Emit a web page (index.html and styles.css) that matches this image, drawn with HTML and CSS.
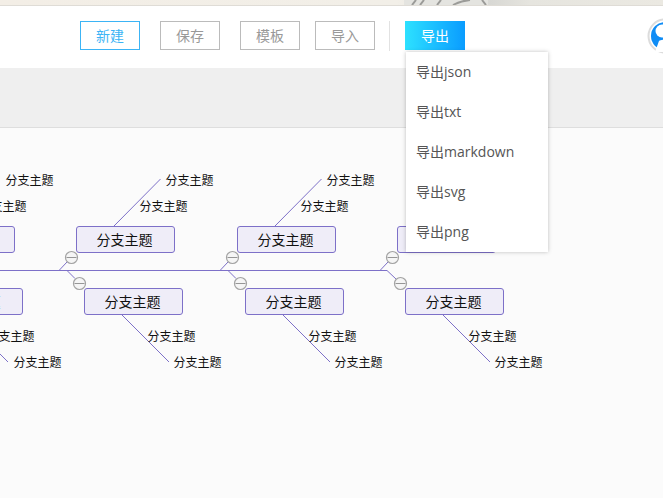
FILE: index.html
```html
<!DOCTYPE html>
<html lang="zh">
<head>
<meta charset="utf-8">
<title>导出</title>
<link rel="stylesheet" href="styles.css">
</head>
<body>
<div class="photo">
  <svg width="663" height="5" viewBox="0 0 663 5">
    <defs>
      <linearGradient id="wash" x1="0" x2="1" y1="0" y2="0">
        <stop offset="0" stop-color="#f3eee6"/>
        <stop offset=".6" stop-color="#f2efe8"/>
        <stop offset=".74" stop-color="#d8d8d4"/>
        <stop offset=".8" stop-color="#e6e5df"/>
        <stop offset="1" stop-color="#ebe9e2"/>
      </linearGradient>
    </defs>
    <rect width="663" height="5" fill="url(#wash)"/>
    <rect x="404" width="84" height="5" fill="#e4e4e0"/>
    <path d="M412 5L416 0M420 5L424 0M437 5L441 0M453 5Q460 1 470 0M482 0L486 5" fill="none" stroke="#9b9b98" stroke-width="2"/>
  </svg>
</div>
<header class="toolbar">
  <button class="btn btn-active">新建</button>
  <button class="btn">保存</button>
  <button class="btn btn-tight">模板</button>
  <button class="btn btn-import">导入</button>
  <span class="divider"></span>
  <div class="export">
    <button class="btn btn-primary">导出</button>
    <ul class="menu">
      <li>导出json</li>
      <li>导出txt</li>
      <li>导出markdown</li>
      <li>导出svg</li>
      <li>导出png</li>
    </ul>
  </div>
  <svg class="avatar" width="36" height="36" viewBox="0 0 36 36">
    <circle cx="18" cy="18" r="16.500" fill="#fff" stroke="#dcdcdc" stroke-width="2"/>
    <circle cx="18" cy="18" r="14" fill="#0f8cf5"/>
    <circle cx="15" cy="13" r="6.500" fill="#fff"/>
    <path d="M12 23 C14 21 22 21 26 24 L32 34 L8 34 Z" fill="#fff"/>
  </svg>
</header>
<div class="subbar"></div>
<main class="canvas">
  <svg class="lines" width="663" height="370" viewBox="0 128 663 370">
    <g fill="none" stroke="#7d70c8" stroke-width="1">
      <path d="M0 270.500H387"/>
      <path d="M59 270.500L67 262M67 270.500L75 278.500"/>
      <path d="M220 270.500L228 262M228 270.500L236 278.500"/>
      <path d="M380 270.500L388 262M387 270.500L396 279"/>
      <path d="M114 226L160.500 179M275 226L321.500 179M435 226L482 179M-47 226L0 179"/>
      <path d="M122 315L169 362M283 315L330 362M443 315L490 362M-39 315L8 362"/>
    </g>
    <g class="toggle">
      <circle cx="71.500" cy="257.500" r="6"/><path d="M66.500 257.500h10"/>
      <circle cx="79.500" cy="283.500" r="6"/><path d="M74.500 283.500h10"/>
      <circle cx="232.500" cy="257.500" r="6"/><path d="M227.500 257.500h10"/>
      <circle cx="240.500" cy="283.500" r="6"/><path d="M235.500 283.500h10"/>
      <circle cx="392.500" cy="257.500" r="6"/><path d="M387.500 257.500h10"/>
      <circle cx="400.500" cy="283.500" r="6"/><path d="M395.500 283.500h10"/>
    </g>
  </svg>

  <div class="node" style="left:-84px;top:98px">分支主题</div>
  <div class="node" style="left:76px;top:98px">分支主题</div>
  <div class="node" style="left:237px;top:98px">分支主题</div>
  <div class="node" style="left:397px;top:98px">分支主题</div>
  <div class="node" style="left:-76px;top:160px">分支主题</div>
  <div class="node" style="left:84px;top:160px">分支主题</div>
  <div class="node" style="left:245px;top:160px">分支主题</div>
  <div class="node" style="left:405px;top:160px">分支主题</div>

  <span class="leaf" style="left:5.500px;top:44px">分支主题</span>
  <span class="leaf" style="left:-21.500px;top:70px">分支主题</span>
  <span class="leaf" style="left:165.500px;top:44px">分支主题</span>
  <span class="leaf" style="left:139.500px;top:70px">分支主题</span>
  <span class="leaf" style="left:326.500px;top:44px">分支主题</span>
  <span class="leaf" style="left:300.500px;top:70px">分支主题</span>
  <span class="leaf" style="left:-13.500px;top:200px">分支主题</span>
  <span class="leaf" style="left:13.500px;top:226px">分支主题</span>
  <span class="leaf" style="left:147.500px;top:200px">分支主题</span>
  <span class="leaf" style="left:173.500px;top:226px">分支主题</span>
  <span class="leaf" style="left:308.500px;top:200px">分支主题</span>
  <span class="leaf" style="left:334.500px;top:226px">分支主题</span>
  <span class="leaf" style="left:468.500px;top:200px">分支主题</span>
  <span class="leaf" style="left:494.500px;top:226px">分支主题</span>
</main>
</body>
</html>
```
FILE: styles.css
```css
* { box-sizing: border-box; }
html, body { margin: 0; height: 100%; overflow: hidden; }
body {
  display: flex;
  flex-direction: column;
  font-family: "Open Sans", "Noto Sans CJK SC", sans-serif;
  background: #fbfbfb;
}
.photo {
  height: 6px;
  flex: none;
  border-bottom: 1px solid #dfdcd6;
  line-height: 0;
}
.photo svg { display: block; }
.toolbar {
  position: relative;
  z-index: 2;
  height: 62px;
  flex: none;
  display: flex;
  align-items: flex-start;
  padding: 15px 0 0 80px;
  background: #fff;
}
.btn {
  flex: none;
  width: 60px;
  height: 29px;
  margin-right: 20px;
  padding: 0;
  font: inherit;
  font-size: 14px;
  line-height: 25px;
  color: #999;
  background: #fff;
  border: 1px solid #bbb;
}
.btn-active { color: #3cb4f5; border-color: #3cb4f5; }
.btn-tight { margin-right: 15px; }
.btn-import { margin-right: 14px; }
.divider { flex: none; width: 1px; height: 30px; margin-right: 15px; background: #e2e2e2; }
.export { position: relative; flex: none; width: 60px; margin-right: 182px; }
.btn-primary {
  color: #fff;
  border: 0;
  margin: 0;
  display: block;
  background: linear-gradient(90deg, #2de1ff, #0a9cff);
}
.menu {
  position: absolute;
  top: 31px;
  left: 1px;
  width: 142px;
  margin: 0;
  padding: 0;
  list-style: none;
  background: #fff;
  box-shadow: 0 0 4px rgba(0, 0, 0, .25);
}
.menu li {
  height: 40px;
  padding-left: 10px;
  font-size: 14px;
  line-height: 40px;
  color: #555;
}
.avatar { flex: none; margin-top: -3px; }
.subbar {
  height: 60px;
  flex: none;
  background: #efefef;
  border-bottom: 1px solid #dedede;
}
.canvas {
  position: relative;
  flex: 1;
  overflow: hidden;
}
.lines { position: absolute; left: 0; top: 0; overflow: visible; }
.toggle circle { fill: #f5f5f5; stroke: #a3a3a3; stroke-width: 1.200; }
.toggle path { fill: none; stroke: #969696; stroke-width: 1; }
.node {
  position: absolute;
  width: 99px;
  height: 27px;
  padding-right: 2px;
  font-size: 14px;
  line-height: 25px;
  text-align: center;
  color: #111;
  background: #efedf8;
  border: 1px solid #7d70c8;
  border-radius: 3px;
}
.leaf {
  position: absolute;
  font-size: 12px;
  line-height: 18px;
  color: #111;
  white-space: nowrap;
}
```
